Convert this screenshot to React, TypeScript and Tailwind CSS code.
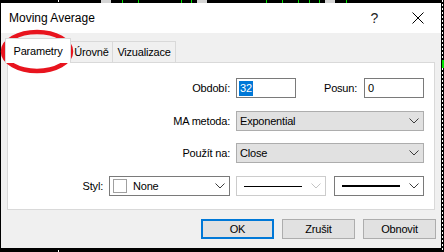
import React from "react";

// chart bits peeking out above the dialog
const greenTicks = [122, 138, 181, 191, 266, 282, 298, 309, 319, 346];
const grayBlocks = [101, 197, 325];

const Chevron: React.FC<{ light?: boolean }> = ({ light }) => (
  <svg width="10" height="6" viewBox="0 0 10 6" className="shrink-0">
    <path
      d="M0.5 0.5 L5 5 L9.5 0.5"
      fill="none"
      stroke={light ? "#c4c4c4" : "#3c3c3c"}
      strokeWidth="1"
    />
  </svg>
);

const Label: React.FC<{ w: string; children: React.ReactNode }> = ({ w, children }) => (
  <div className={`${w} shrink-0 text-right pr-[6px]`}>{children}</div>
);

const App: React.FC = () => {
  return (
    <div className="relative w-[444px] h-[252px] bg-black overflow-hidden font-['Liberation_Sans',Arial,sans-serif] text-[11px] tracking-[-0.2px] text-black">
      {/* background chart strip */}
      <div className="h-[3px] relative">
        <div className="absolute left-[58px] top-0 w-px h-[2px] bg-white" />
        {greenTicks.map((x) => (
          <div key={x} className="absolute top-0 w-px h-[3px] bg-[#00e000]" style={{ left: x }} />
        ))}
        {grayBlocks.map((x) => (
          <div key={x} className="absolute top-0 w-[10px] h-[3px] bg-[#d4d4d4]" style={{ left: x }} />
        ))}
      </div>
      <div className="absolute right-[1px] top-0 h-full w-px bg-[repeating-linear-gradient(to_bottom,#ffffff_0px,#ffffff_2px,transparent_2px,transparent_4px)]" />
      <div className="absolute right-0 top-[60px] w-[2px] h-[8px] bg-[#00e000]" />
      <div className="absolute left-[58px] bottom-0 w-px h-[2px] bg-white" />

      {/* dialog */}
      <div className="ml-[1px] w-[440px] h-[245px] flex flex-col">
        <div className="h-[30px] bg-white flex items-center pl-[8px]">
          <span className="text-[12px] tracking-normal">Moving Average</span>
          <span className="ml-auto mr-[34px] text-[14px] text-[#222]">?</span>
          <svg width="12" height="12" viewBox="0 0 12 12" className="mr-[17px]">
            <path d="M0.5 0.5 L11.5 11.5 M11.5 0.5 L0.5 11.5" stroke="#000" strokeWidth="1" />
          </svg>
        </div>

        <div className="flex-1 bg-[#f0f0f0] px-[6px] pt-[5px] flex flex-col">
          {/* tabs */}
          <div className="flex items-end h-[24px] -ml-[2px]">
            <div className="relative z-10 w-[66px] h-[25px] -mb-px bg-white border border-b-0 border-[#d9d9d9] flex items-center justify-center">
              Parametry
            </div>
            <div className="w-[42px] h-[21px] border border-l-0 border-b-0 border-[#d9d9d9] flex items-center justify-center">
              Úrovně
            </div>
            <div className="w-[63px] h-[21px] border border-l-0 border-b-0 border-[#d9d9d9] flex items-center justify-center">
              Vizualizace
            </div>
          </div>

          {/* panel */}
          <div className="h-[148px] bg-white border border-[#d9d9d9] flex flex-col">
            <div className="mt-[15px] flex items-center h-[20px]">
              <Label w="w-[228px]">Období:</Label>
              <div className="w-[60px] h-[20px] border border-[#7a7a7a] flex items-center pl-[2px]">
                <span className="bg-[#0078d7] text-white leading-[15px] px-px">32</span>
              </div>
              <div className="ml-[28px] w-[33px]">Posun:</div>
              <div className="ml-[7px] w-[60px] h-[20px] border border-[#7a7a7a] flex items-center pl-[3px]">
                0
              </div>
            </div>

            <div className="mt-[13px] flex items-center h-[20px]">
              <Label w="w-[228px]">MA metoda:</Label>
              <div className="w-[188px] h-[20px] bg-[#e1e1e1] border border-[#adadad] flex items-center pl-[3px] pr-[4px]">
                <span className="flex-1">Exponential</span>
                <Chevron />
              </div>
            </div>

            <div className="mt-[12px] flex items-center h-[20px]">
              <Label w="w-[228px]">Použít na:</Label>
              <div className="w-[188px] h-[20px] bg-[#e1e1e1] border border-[#adadad] flex items-center pl-[3px] pr-[4px]">
                <span className="flex-1">Close</span>
                <Chevron />
              </div>
            </div>

            <div className="mt-[13px] flex items-center h-[20px]">
              <Label w="w-[101px]">Styl:</Label>
              <div className="w-[121px] h-[20px] border border-[#7a7a7a] flex items-center pl-[3px] pr-[4px]">
                <div className="w-[14px] h-[14px] border border-[#a0a0a0] bg-white" />
                <span className="flex-1 ml-[6px]">None</span>
                <Chevron />
              </div>
              <div className="ml-[6px] w-[90px] h-[20px] border border-[#cccccc] flex items-center pl-[7px] pr-[4px]">
                <div className="w-[58px] h-px bg-black" />
                <div className="flex-1" />
                <Chevron light />
              </div>
              <div className="ml-[8px] w-[90px] h-[20px] border border-[#7a7a7a] flex items-center pl-[7px] pr-[4px]">
                <div className="w-[58px] h-[2px] bg-black" />
                <div className="flex-1" />
                <Chevron />
              </div>
            </div>
          </div>

          {/* buttons */}
          <div className="mt-[9px] flex justify-end gap-[8px] -mr-[1px]">
            <button className="w-[73px] h-[20px] bg-[#e1e1e1] border-2 border-[#0078d7] flex items-center justify-center">
              OK
            </button>
            <button className="w-[73px] h-[20px] bg-[#e1e1e1] border border-[#adadad] flex items-center justify-center">
              Zrušit
            </button>
            <button className="w-[73px] h-[20px] bg-[#e1e1e1] border border-[#adadad] flex items-center justify-center">
              Obnovit
            </button>
          </div>
        </div>
      </div>

      {/* red highlight drawn over the first tab */}
      <svg width="76" height="46" viewBox="0 0 76 46" className="absolute left-0 top-[29px] pointer-events-none">
        <ellipse cx="37" cy="22.5" rx="34" ry="19.5" fill="none" stroke="#e8141e" strokeWidth="4.5" />
      </svg>
    </div>
  );
};

export default App;
